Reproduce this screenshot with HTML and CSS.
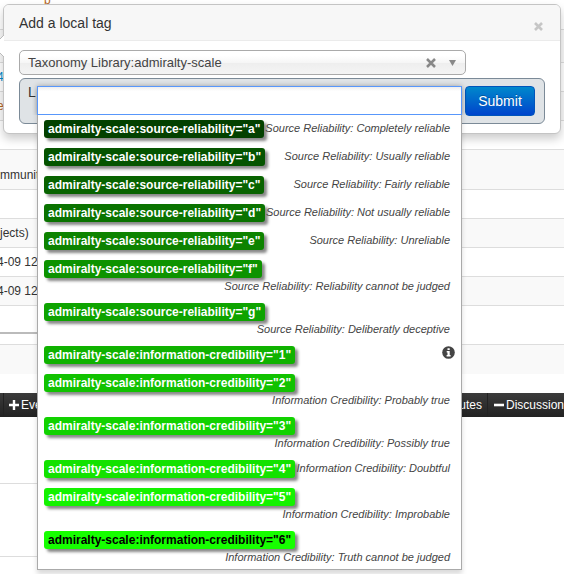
FILE: index.html
```
<!DOCTYPE html>
<html lang="en">
<head>
<meta charset="utf-8">
<title>Add a local tag</title>
<link rel="stylesheet" href="styles.css">
</head>
<body>
<main class="page">
  <table class="details">
    <tbody>
      <tr><td class="accent top"><span>p</span></td></tr>
      <tr class="medium"><td></td></tr>
      <tr><td class="outdent"><a href="#">4</a></td></tr>
      <tr><td class="accent outdent">ef</td></tr>
      <tr><td></td></tr>
      <tr class="tall"><td>mmunit</td></tr>
      <tr><td></td></tr>
      <tr><td>jects)</td></tr>
      <tr><td class="outdent">4-09 12</td></tr>
      <tr><td class="outdent">4-09 12</td></tr>
    </tbody>
  </table>
  <div class="divider"></div>
  <div class="band"></div>
  <nav class="tabs">
    <a href="#"><svg width="10" height="10" viewBox="0 0 10 10"><path d="M5 0v10M0 5h10" stroke="#fff" stroke-width="2.4"/></svg>Eve</a>
    <div class="tabs-right">
      <a href="#">utes</a>
      <a href="#"><svg width="10" height="10" viewBox="0 0 10 10"><path d="M0 5h10" stroke="#fff" stroke-width="2.6"/></svg>Discussion</a>
    </div>
  </nav>
  <div class="below"><div class="line"></div><div class="line"></div></div>
</main>

<section class="popover">
  <svg class="arrow" width="12" height="24" viewBox="0 0 12 24"><path d="M12 1L1 12L12 23Z" fill="#fff"/><path d="M12 1L1 12L12 23" fill="none" stroke="#bbb"/></svg>
  <header class="popover-head">
    <h1>Add a local tag</h1>
    <button class="close" aria-label="Close"><svg width="9" height="9" viewBox="0 0 9 9"><path d="M1 1l7 7M8 1l-7 7" stroke="#c6c6c6" stroke-width="2.6"/></svg></button>
  </header>
  <div class="popover-body">
    <button class="library">
      <span>Taxonomy Library:admiralty-scale</span>
      <svg class="clear" width="10" height="10" viewBox="0 0 10 10"><path d="M1 1l8 8M9 1l-8 8" stroke="#888" stroke-width="2.5"/></svg>
      <svg width="7" height="6" viewBox="0 0 7 6"><path d="M0 0h7L3.5 6z" fill="#888"/></svg>
    </button>
    <div class="entry">
      <span>L</span>
      <button class="submit">Submit</button>
    </div>
  </div>

  <div class="dropdown">
    <input class="search" type="text" aria-label="Search tags">
    <ul class="options">
      <li><span class="tag sa">admiralty-scale:source-reliability="a"</span><em>Source Reliability: Completely reliable</em></li>
      <li><span class="tag sb">admiralty-scale:source-reliability="b"</span><em>Source Reliability: Usually reliable</em></li>
      <li><span class="tag sc">admiralty-scale:source-reliability="c"</span><em>Source Reliability: Fairly reliable</em></li>
      <li><span class="tag sd">admiralty-scale:source-reliability="d"</span><em>Source Reliability: Not usually reliable</em></li>
      <li><span class="tag se">admiralty-scale:source-reliability="e"</span><em>Source Reliability: Unreliable</em></li>
      <li><span class="tag sf">admiralty-scale:source-reliability="f"</span><em>Source Reliability: Reliability cannot be judged</em></li>
      <li><span class="tag sg">admiralty-scale:source-reliability="g"</span><em>Source Reliability: Deliberatly deceptive</em></li>
      <li class="with-icon"><span class="tag i1">admiralty-scale:information-credibility="1"</span><svg width="13" height="13" viewBox="0 0 13 13"><circle cx="6.5" cy="6.5" r="6.3" fill="#444"/><path d="M5.5 2.2h2.2v1.8H5.5zM4.7 5h3v4h.9v1.5H4.6V9h.9V6.4h-.8z" fill="#fff"/></svg></li>
      <li><span class="tag i2">admiralty-scale:information-credibility="2"</span><em>Information Credibility: Probably true</em></li>
      <li><span class="tag i3">admiralty-scale:information-credibility="3"</span><em>Information Credibility: Possibly true</em></li>
      <li><span class="tag i4">admiralty-scale:information-credibility="4"</span><em>Information Credibility: Doubtful</em></li>
      <li><span class="tag i5">admiralty-scale:information-credibility="5"</span><em>Information Credibility: Improbable</em></li>
      <li><span class="tag i6">admiralty-scale:information-credibility="6"</span><em>Information Credibility: Truth cannot be judged</em></li>
    </ul>
  </div>
</section>
</body>
</html>
```
FILE: styles.css
```
* { box-sizing: border-box; }

body {
  margin: 0;
  background: #fff;
  color: #333;
  font: 14px/20px "Liberation Sans", Arial, sans-serif;
  position: relative;
  overflow: hidden;
}

button { font: inherit; margin: 0; cursor: pointer; }
a { color: #0088cc; text-decoration: none; }

/* event details behind the popover */
.details { width: 100%; border-collapse: separate; border-spacing: 0; font-size: 12px; }
.details td { height: 29px; padding: 0; border-bottom: 1px solid #ddd; overflow: hidden; }
.details tr:nth-child(even) td { background: #f9f9f9; }
.details .outdent { text-indent: -3px; }
.details .medium td { height: 33px; }
.details .tall td { height: 40px; padding-top: 10px; }
.details .accent { color: #b5651d; }
.details .top { height: 30px; padding: 0 0 29px 44px; line-height: 0; }
.details .top span { display: block; line-height: 0; height: 0; }

.divider { width: 37px; height: 28px; border-bottom: 2px solid #bbb; }
.band { height: 30px; margin-top: 10px; background: #f9f9f9; border-top: 1px solid #ddd; }

.tabs {
  display: flex;
  justify-content: space-between;
  height: 24px;
  margin-top: 19px;
  background: linear-gradient(#3b3b3b, #222);
  font-size: 12px;
  line-height: 24px;
}
.tabs a { display: flex; align-items: center; gap: 2px; padding: 0 5px; border-left: 1px solid #222; color: #fff; }
.tabs > a { margin-left: 3px; }
.tabs-right { display: flex; }
.tabs-right a:last-child { padding: 0 0 0 6px; }

.below { height: 157px; padding-top: 66px; }
.line { width: 37px; height: 1px; margin-bottom: 72px; background: #ddd; }

.popover {
  position: absolute;
  top: 4px;
  left: 3px;
  right: 3px;
  background: #fff;
  border: 1px solid #c4c4c4;
  border-radius: 6px;
  box-shadow: 0 5px 10px rgba(0, 0, 0, .2);
}
.arrow { position: absolute; top: 29px; left: -12px; }

.popover-head {
  display: flex;
  justify-content: space-between;
  align-items: center;
  height: 36px;
  padding: 0 17px 0 15px;
  background: #f7f7f7;
  border-bottom: 1px solid #ebebeb;
  border-radius: 5px 5px 0 0;
}
.popover-head h1 { margin: 0; font-size: 14px; font-weight: 400; }
.close { display: flex; padding: 8px 0 0; border: 0; background: none; }

.popover-body { padding: 9px 15px; }

.library {
  display: flex;
  align-items: center;
  gap: 13px;
  width: 447px;
  max-width: 100%;
  height: 25px;
  padding: 1px 9px 0 8px;
  border: 1px solid #aaa;
  border-radius: 5px;
  background: linear-gradient(#fff 20%, #f6f6f6 50%, #eee 52%, #f4f4f4);
  color: #444;
  font-size: 13px;
  text-align: left;
}
.library span { flex: 1; }

.entry {
  display: flex;
  justify-content: space-between;
  align-items: flex-start;
  height: 46px;
  margin-top: 3px;
  padding: 7px 9px 7px 8px;
  border: 1px solid #7b8a97;
  border-radius: 6px;
  background: #dfe3e6;
}
.entry span { line-height: 12px; }

.submit {
  height: 30px;
  width: 70px;
  padding: 0;
  border: 1px solid #0055bb;
  border-radius: 4px;
  background: linear-gradient(#0088cc, #0044cc);
  color: #fff;
  text-shadow: 0 -1px 0 rgba(0, 0, 0, .25);
}

/* tag list opened over the page */
.dropdown {
  position: absolute;
  top: 81px;
  left: 33px;
  width: 425px;
  background: #fff;
  border: 1px solid #aaa;
  border-top: 0;
  box-shadow: 0 4px 5px rgba(0, 0, 0, .15);
}
.search {
  display: block;
  width: 425px;
  height: 29px;
  margin: 0 -1px;
  padding: 4px;
  border: 1px solid #5897fb;
  background: linear-gradient(#eee, #fff 15%);
  outline: 0;
  box-shadow: 0 0 5px rgba(0, 0, 0, .3);
  clip-path: inset(-5px -5px 0 -5px);
}
.options { margin: 0; padding: 0; list-style: none; }
.options li {
  display: flex;
  flex-wrap: wrap;
  justify-content: space-between;
  align-items: flex-start;
  padding: 5px 11px 5px 6px;
}
.options .with-icon { padding-right: 6px; }
.options em { margin-left: auto; padding-top: 2px; color: #444; font-size: 11px; line-height: 13px; }

.tag {
  padding: 0 4px;
  border-radius: 3px;
  box-shadow: 3px 3px 3px #888;
  color: #fff;
  font-size: 12px;
  font-weight: 700;
  line-height: 18px;
}
.sa { background: #034100; }
.sb { background: #055400; }
.sc { background: #086300; }
.sd { background: #0a7300; }
.se { background: #0d8300; }
.sf { background: #0d9300; }
.sg { background: #0ea300; }
.i1 { background: #10b200; }
.i2 { background: #11c200; }
.i3 { background: #12d200; }
.i4 { background: #13e200; }
.i5 { background: #14f200; }
.i6 { background: #16ff00; color: #000; }
```
